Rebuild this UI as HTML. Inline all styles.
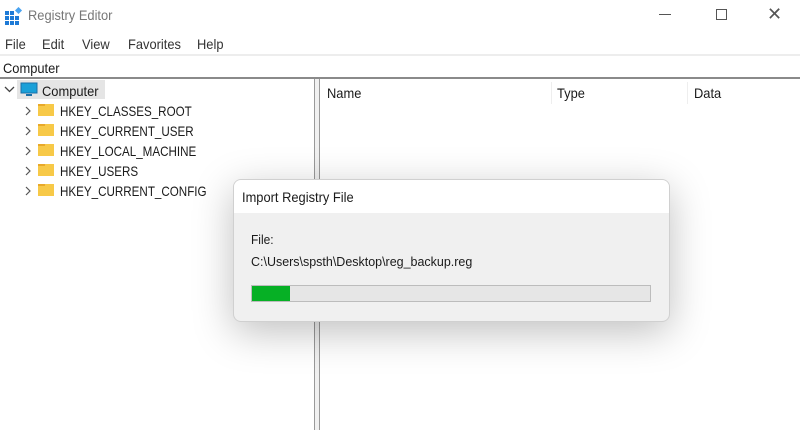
<!DOCTYPE html>
<html><head><style>
body{margin:0;width:800px;height:430px;background:#fff;font-family:"Liberation Sans",sans-serif;position:relative;overflow:hidden;color:#1a1a1a}
.a{position:absolute;white-space:nowrap}
.t{font-size:14px;transform-origin:0 0}
.c{transform:scaleX(0.83)}
.m{transform:scaleX(0.92)}
</style></head><body>
<svg class="a" style="left:5px;top:7px" width="18" height="18" viewBox="0 0 18 18">
<g fill="#1e7ad6"><rect x="0" y="4" width="4" height="4"/><rect x="5" y="4" width="4" height="4"/><rect x="0" y="9" width="4" height="4"/><rect x="5" y="9" width="4" height="4"/><rect x="10" y="9" width="4" height="4"/><rect x="0" y="14" width="4" height="4"/><rect x="5" y="14" width="4" height="4"/><rect x="10" y="14" width="4" height="4"/></g>
<rect x="11" y="1" width="5" height="5" fill="#4aa3f0" transform="rotate(45 13.5 3.5)"/></svg>
<div class="a t m" style="left:28px;top:7px;color:#777">Registry Editor</div>
<div class="a" style="left:659px;top:14px;width:12px;height:1px;background:#555"></div>
<div class="a" style="left:716px;top:9px;width:9px;height:9px;border:1px solid #555"></div>
<div class="a" style="left:767px;top:4px;font-size:18px;color:#555">✕</div>
<div class="a t m" style="left:5px;top:36px;color:#333">File</div>
<div class="a t m" style="left:42px;top:36px;color:#333">Edit</div>
<div class="a t m" style="left:82px;top:36px;color:#333">View</div>
<div class="a t m" style="left:128px;top:36px;color:#333">Favorites</div>
<div class="a t m" style="left:197px;top:36px;color:#333">Help</div>
<div class="a" style="left:0;top:54px;width:800px;height:2px;background:#ededed"></div>
<div class="a t m" style="left:3px;top:60px">Computer</div>
<div class="a" style="left:0;top:77px;width:800px;height:2px;background:#8a8a8a"></div>
<div class="a" style="left:314px;top:79px;width:1px;height:351px;background:#999"></div>
<div class="a" style="left:319px;top:79px;width:1px;height:351px;background:#999"></div>
<div class="a" style="left:315px;top:79px;width:4px;height:351px;background:#f0f0f0"></div>
<div class="a" style="left:551px;top:82px;width:1px;height:22px;background:#eee"></div>
<div class="a" style="left:687px;top:82px;width:1px;height:22px;background:#eee"></div>
<div class="a t m" style="left:327px;top:85px">Name</div>
<div class="a t m" style="left:557px;top:85px">Type</div>
<div class="a t m" style="left:694px;top:85px">Data</div>
<div class="a" style="left:17px;top:80px;width:88px;height:19px;background:#e5e5e5"></div>
<svg class="a" style="left:4px;top:85px" width="12" height="10"><path d="M1 2l4.5 4.5L10 2" fill="none" stroke="#444" stroke-width="1.3"/></svg>
<svg class="a" style="left:20px;top:82px" width="18" height="16"><rect x="1" y="1" width="16" height="10" fill="#1aa0d8" stroke="#1a6fa8"/><rect x="6" y="12" width="6" height="2" fill="#1a6fa8"/></svg>
<div class="a t m" style="left:42px;top:83px">Computer</div>
<div style="position:absolute;left:0;top:100px">
<div class="a t c" style="left:60px;top:3px">HKEY_CLASSES_ROOT</div>
<div class="a t c" style="left:60px;top:23px">HKEY_CURRENT_USER</div>
<div class="a t c" style="left:60px;top:43px">HKEY_LOCAL_MACHINE</div>
<div class="a t c" style="left:60px;top:63px">HKEY_USERS</div>
<div class="a t c" style="left:60px;top:83px">HKEY_CURRENT_CONFIG</div>
</div>
<svg class="a" style="left:20px;top:100px" width="40" height="100">
<g fill="none" stroke="#555" stroke-width="1.2"><path d="M6 7l4 4-4 4M6 27l4 4-4 4M6 47l4 4-4 4M6 67l4 4-4 4M6 87l4 4-4 4"/></g>
<g fill="#f7c948"><rect x="18" y="4" width="16" height="12"/><rect x="18" y="24" width="16" height="12"/><rect x="18" y="44" width="16" height="12"/><rect x="18" y="64" width="16" height="12"/><rect x="18" y="84" width="16" height="12"/></g>
<g fill="#e8a92a"><rect x="18" y="4" width="7" height="2"/><rect x="18" y="24" width="7" height="2"/><rect x="18" y="44" width="7" height="2"/><rect x="18" y="64" width="7" height="2"/><rect x="18" y="84" width="7" height="2"/></g>
</svg>
<div class="a" style="left:233px;top:179px;width:435px;height:141px;border:1px solid #d0d0d0;border-radius:8px;background:#f0f0f0;box-shadow:0 10px 40px rgba(0,0,0,0.25);overflow:hidden">
<div style="height:33px;background:#fff"></div>
<div class="a t m" style="left:8px;top:9px">Import Registry File</div>
<div class="a t m" style="left:17px;top:52px;font-size:13px">File:</div>
<div class="a t m" style="left:17px;top:74px;font-size:13px;transform:scaleX(0.96)">C:\Users\spsth\Desktop\reg_backup.reg</div>
<div class="a" style="left:17px;top:105px;width:398px;height:15px;border:1px solid #bcbcbc;background:#e6e6e6"><div style="width:38px;height:15px;background:#06b025"></div></div>
</div>
</body></html>
